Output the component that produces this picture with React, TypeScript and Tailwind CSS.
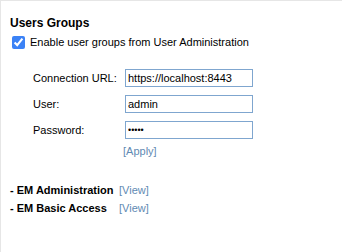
import { useState } from 'react';

const groups = ['EM Administration', 'EM Basic Access'];

export default function App() {
  const [enabled, setEnabled] = useState(true);
  const [url, setUrl] = useState('https://localhost:8443');
  const [user, setUser] = useState('admin');
  const [password, setPassword] = useState('admin');

  return (
    <div className="w-[342px] h-[252px] bg-white border-t border-l border-[#e6e6e6] font-['Liberation_Sans',Arial,sans-serif] text-black overflow-hidden">
      <div className="pl-[9px] pt-[14px]">
        <h2 className="text-[12px] font-bold leading-[16px]">Users Groups</h2>
        <label className="mt-[4px] ml-[2px] flex items-center gap-[5px] text-[11px] leading-[14px]">
          <input
            type="checkbox"
            checked={enabled}
            onChange={(e) => setEnabled(e.target.checked)}
            className="w-[13px] h-[13px] m-0 accent-[#3b82f6]"
          />
          <span>Enable user groups from User Administration</span>
        </label>

        <div className="mt-[20px] ml-[23px] grid grid-cols-[92px_128px] gap-y-[8px] items-center text-[11px]">
          <span>Connection URL:</span>
          <input
            value={url}
            onChange={(e) => setUrl(e.target.value)}
            className="h-[18px] border border-[#7fa6cf] px-[2px] text-[11px] outline-none"
          />
          <span>User:</span>
          <input
            value={user}
            onChange={(e) => setUser(e.target.value)}
            className="h-[18px] border border-[#7fa6cf] px-[2px] text-[11px] outline-none"
          />
          <span>Password:</span>
          <input
            type="password"
            value={password}
            onChange={(e) => setPassword(e.target.value)}
            className="h-[18px] border border-[#7fa6cf] px-[2px] text-[9px] outline-none"
          />
          <span />
          <a href="#" className="-ml-[2px] -mt-[3px] text-[#5f8ab3] leading-[14px]">[Apply]</a>
        </div>

        <ul className="mt-[25px] flex flex-col gap-[4px] text-[11px] leading-[14px]">
          {groups.map((g) => (
            <li key={g} className="flex">
              <span className="w-[109px] font-bold">- {g}</span>
              <a href="#" className="text-[#5f8ab3]">[View]</a>
            </li>
          ))}
        </ul>
      </div>
    </div>
  );
}
